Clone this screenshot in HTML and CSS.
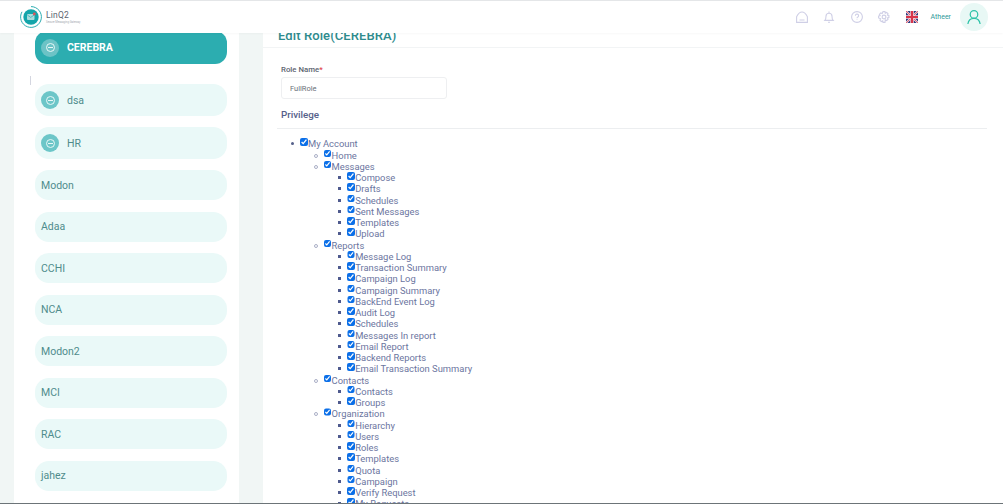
FILE: index.html
```html
<!DOCTYPE html>
<html lang="en">
<head>
<meta charset="utf-8">
<title>Edit Role</title>
<link rel="stylesheet" href="styles.css">
</head>
<body>
<div class="app">
  <header class="topbar">
    <div class="brand">
      <svg class="logo" viewBox="0 0 22 22" width="22" height="22" fill="none">
        <path d="M11 .6a10.400 10.400 0 1 1-9 5.200" stroke="#2aacb0" stroke-width="1"/>
        <circle cx="11" cy="11" r="7.700" fill="#14a5aa"/>
        <rect x="7" y="8" width="7.500" height="6" rx="1" fill="#a9dcdc"/>
        <path d="M7.300 9l3.400 2.400L14.200 9" stroke="#14a5aa" stroke-width=".6"/>
        <circle cx="14.300" cy="8" r="1.400" fill="#e0525a"/>
      </svg>
      <div class="brand-text">
        <span class="brand-name">LinQ2</span>
        <span class="brand-sub">Secure Messaging Gateway</span>
      </div>
    </div>
    <nav class="actions">
      <svg class="ico" viewBox="0 0 12 12" width="12" height="12"><path d="M.6 11.400h10.800V5.800C10 3 8 1 6 1S2 3 .6 5.800zM3.500 9h5"/></svg>
      <svg class="ico" viewBox="0 0 12 12" width="12" height="12"><path d="M1.800 9.400h8.400c-.9-1-1.200-2-1.200-4.200a3 3 0 0 0-6 0c0 2.200-.3 3.200-1.200 4.200zM6 .4v1.800M5 11.300h2"/></svg>
      <svg class="ico" viewBox="0 0 12 12" width="12" height="12"><circle cx="6" cy="6" r="5.400"/><path d="M4.400 4.700a1.600 1.600 0 1 1 2.400 1.400c-.6.300-.8.600-.8 1.200M6 8.400v.6"/></svg>
      <svg class="ico" viewBox="0 0 12 12" width="12" height="12"><circle cx="6" cy="6" r="1.900"/><path d="M5 .6h2l.3 1.500 1.400-.7 1.400 1.400-.7 1.400 1.500.3v2l-1.500.3.700 1.400-1.400 1.400-1.400-.7L7 11.400H5l-.3-1.500-1.400.7-1.400-1.400.7-1.400L.6 7V5l1.500-.3-.7-1.400 1.400-1.400 1.400.7z"/></svg>
      <svg class="flag" viewBox="0 0 12 12" width="12" height="12">
        <rect width="12" height="12" fill="#2b3a80"/>
        <path d="M0 0l12 12M12 0L0 12" stroke="#f3d6dc" stroke-width="2"/>
        <path d="M0 0l12 12M12 0L0 12" stroke="#d8344a" stroke-width=".7"/>
        <path d="M6 0v12M0 6h12" stroke="#f3d6dc" stroke-width="3.600"/>
        <path d="M6 0v12M0 6h12" stroke="#d8344a" stroke-width="2.200"/>
      </svg>
      <span class="user">Atheer</span>
      <span class="avatar">
        <svg viewBox="0 0 16 18" width="14" height="16" fill="none" stroke="#2dc3a8" stroke-width="1.400"><circle cx="8" cy="6" r="4.300"/><path d="M1 17c.5-4 3-6.500 7-6.500s6.500 2.500 7 6.500"/></svg>
      </span>
    </nav>
  </header>

  <div class="body">
    <aside class="sidebar">
      <div class="side-inner">
        <div class="org active"><span class="badge"><i class="minus"></i></span><span>CEREBRA</span></div>
        <span class="tick"></span>
        <div class="org tree"><span class="badge"><i class="minus"></i></span><span>dsa</span></div>
        <div class="org tree"><span class="badge"><i class="minus"></i></span><span>HR</span></div>
        <div class="org">Modon</div>
        <div class="org">Adaa</div>
        <div class="org">CCHI</div>
        <div class="org">NCA</div>
        <div class="org">Modon2</div>
        <div class="org">MCI</div>
        <div class="org">RAC</div>
        <div class="org">jahez</div>
      </div>
    </aside>

    <main class="panel">
      <div class="panel-scroll">
        <h1 class="title">Edit Role(CEREBRA)</h1>
        <form class="form">
          <label class="field-label" for="role">Role Name<b>*</b></label>
          <input class="field" id="role" type="text" value="FullRole">
        </form>
        <h2 class="section">Privilege</h2>
        <ul class="tree-root">
          <li><label><input type="checkbox" checked>My Account</label>
            <ul>
              <li><label><input type="checkbox" checked>Home</label></li>
              <li><label><input type="checkbox" checked>Messages</label>
                <ul>
                  <li><label><input type="checkbox" checked>Compose</label></li>
                  <li><label><input type="checkbox" checked>Drafts</label></li>
                  <li><label><input type="checkbox" checked>Schedules</label></li>
                  <li><label><input type="checkbox" checked>Sent Messages</label></li>
                  <li><label><input type="checkbox" checked>Templates</label></li>
                  <li><label><input type="checkbox" checked>Upload</label></li>
                </ul>
              </li>
              <li><label><input type="checkbox" checked>Reports</label>
                <ul>
                  <li><label><input type="checkbox" checked>Message Log</label></li>
                  <li><label><input type="checkbox" checked>Transaction Summary</label></li>
                  <li><label><input type="checkbox" checked>Campaign Log</label></li>
                  <li><label><input type="checkbox" checked>Campaign Summary</label></li>
                  <li><label><input type="checkbox" checked>BackEnd Event Log</label></li>
                  <li><label><input type="checkbox" checked>Audit Log</label></li>
                  <li><label><input type="checkbox" checked>Schedules</label></li>
                  <li><label><input type="checkbox" checked>Messages In report</label></li>
                  <li><label><input type="checkbox" checked>Email Report</label></li>
                  <li><label><input type="checkbox" checked>Backend Reports</label></li>
                  <li><label><input type="checkbox" checked>Email Transaction Summary</label></li>
                </ul>
              </li>
              <li><label><input type="checkbox" checked>Contacts</label>
                <ul>
                  <li><label><input type="checkbox" checked>Contacts</label></li>
                  <li><label><input type="checkbox" checked>Groups</label></li>
                </ul>
              </li>
              <li><label><input type="checkbox" checked>Organization</label>
                <ul>
                  <li><label><input type="checkbox" checked>Hierarchy</label></li>
                  <li><label><input type="checkbox" checked>Users</label></li>
                  <li><label><input type="checkbox" checked>Roles</label></li>
                  <li><label><input type="checkbox" checked>Templates</label></li>
                  <li><label><input type="checkbox" checked>Quota</label></li>
                  <li><label><input type="checkbox" checked>Campaign</label></li>
                  <li><label><input type="checkbox" checked>Verify Request</label></li>
                  <li><label><input type="checkbox" checked>My Requests</label></li>
                </ul>
              </li>
            </ul>
          </li>
        </ul>
      </div>
    </main>
  </div>
  <div class="bottom-line"></div>
</div>
</body>
</html>
```
FILE: styles.css
```css
* { box-sizing: border-box; }
html, body { margin: 0; padding: 0; height: 100%; overflow: hidden; }
body { font-family: Roboto, "Liberation Sans", sans-serif; background: #f1f6f5; }

.app { width: 1003px; height: 504px; display: flex; flex-direction: column; overflow: hidden; }

.topbar {
  flex: 0 0 33px;
  position: relative;
  z-index: 1;
  background: #fff;
  border-top: 1px solid #e4e6e8;
  box-shadow: 0 1px 2px rgba(0, 0, 0, .03);
  display: flex;
  justify-content: space-between;
  align-items: center;
  padding: 0 15px 0 20px;
}
.brand { display: flex; align-items: center; gap: 4px; }
.logo { display: block; }
.brand-text { display: flex; flex-direction: column; }
.brand-name { font-size: 8.500px; line-height: 9px; color: #5d6470; letter-spacing: .2px; }
.brand-sub { font-size: 2.800px; line-height: 4px; color: #a4a9b0; white-space: nowrap; }

.actions { display: flex; align-items: center; }
.ico { fill: none; stroke: #cfcfe6; stroke-width: 1.100; margin-right: 15.500px; }
.flag { margin-right: 13px; }
.user { font-size: 7px; color: #2f9a9a; margin-right: 9px; }
.avatar {
  width: 28px; height: 28px; border-radius: 50%;
  background: #e8f8f5;
  display: flex; align-items: center; justify-content: center;
}

.body { flex: 1; min-height: 0; display: flex; padding-left: 14px; gap: 24px; }

.sidebar { width: 225px; background: #fff; overflow: hidden; }
.side-inner { display: flex; flex-direction: column; padding: 0 12px 0 21px; }
.org {
  flex: none;
  height: 30px;
  margin-bottom: 11.500px;
  border-radius: 14px;
  background: #eaf9f8;
  color: #4f8c8c;
  font-size: 10.500px;
  display: flex;
  align-items: center;
  padding-left: 6px;
}
.org.active {
  height: 33px;
  margin-top: -2px;
  margin-bottom: 0;
  border-radius: 12px;
  background: #2cadb0;
  color: #fff;
  font-weight: 700;
}
.org.tree { height: 32px; margin-bottom: 11px; }
.badge {
  width: 18px; height: 18px; border-radius: 50%;
  background: #6cc6c8;
  display: flex; align-items: center; justify-content: center;
  margin-right: 8px;
}
.active .badge { background: #6cc3c6; }
.minus {
  width: 9px; height: 9px; border-radius: 50%;
  border: 1px solid #e8f8f7;
  display: flex; align-items: center; justify-content: center;
}
.minus::before { content: ""; width: 5px; height: 1px; background: #e8f8f7; }
.tick { flex: none; align-self: flex-start; width: 1px; height: 9px; background: #d4d6e0; margin: 12px 0 -1px -5px; }

.panel { flex: 1; min-width: 0; background: #fff; overflow: hidden; }
.panel-scroll { margin-top: -6px; }
.title {
  margin: 0;
  height: 21px;
  padding-left: 15px;
  font-size: 13px;
  line-height: 17px;
  font-weight: 500;
  color: #2e8b8d;
  border-bottom: 1px solid #f2f4f5;
  letter-spacing: .1px;
}
.form { padding: 17px 0 0 18px; }
.field-label { display: block; font-size: 7.800px; line-height: 10px; font-weight: 500; color: #5c6470; margin-bottom: 2px; }
.field-label b { color: #e0404a; font-weight: 500; }
.field {
  display: block;
  width: 166px; height: 22px;
  border: 1px solid #eeeff1;
  border-radius: 3px;
  padding: 0 8px;
  font: 400 7.500px Roboto, sans-serif;
  color: #6a7078;
  background: #fff;
}
.section {
  margin: 9px 16px 0 14px;
  padding: 0 0 7px 4px;
  font-size: 9.800px;
  line-height: 13px;
  font-weight: 500;
  color: #55608a;
  border-bottom: 1px solid #eceef0;
}
.tree-root, .tree-root ul { margin: 0; padding-left: 23.600px; color: #6b75a0; font-size: 9.400px; line-height: 11.250px; list-style: none; }
.tree-root { padding-left: 37px; margin-top: 9.300px; }
.tree-root li::before {
  content: "";
  display: inline-block;
  box-sizing: border-box;
  width: 3px; height: 3px;
  margin: 0 6.500px 0 -9.500px;
  vertical-align: 2px;
  border-radius: 50%;
  background: #55608a;
}
.tree-root ul li::before { background: none; border: 1px solid #a9aec6; width: 4px; height: 4px; margin-right: 5.500px; vertical-align: 1px; }
.tree-root ul ul li::before { background: #4f5a8e; border: 0; border-radius: 0; width: 3px; height: 3px; margin-right: 6.500px; vertical-align: 2px; }
.tree-root label { display: inline-block; vertical-align: top; height: 11.250px; }
.tree-root input {
  width: 7.500px; height: 7.500px; margin: 0 .5px 0 0;
  vertical-align: 1.500px;
  accent-color: #0b6fe8;
}

.bottom-line { flex: 0 0 1px; background: #6c7478; }
```
